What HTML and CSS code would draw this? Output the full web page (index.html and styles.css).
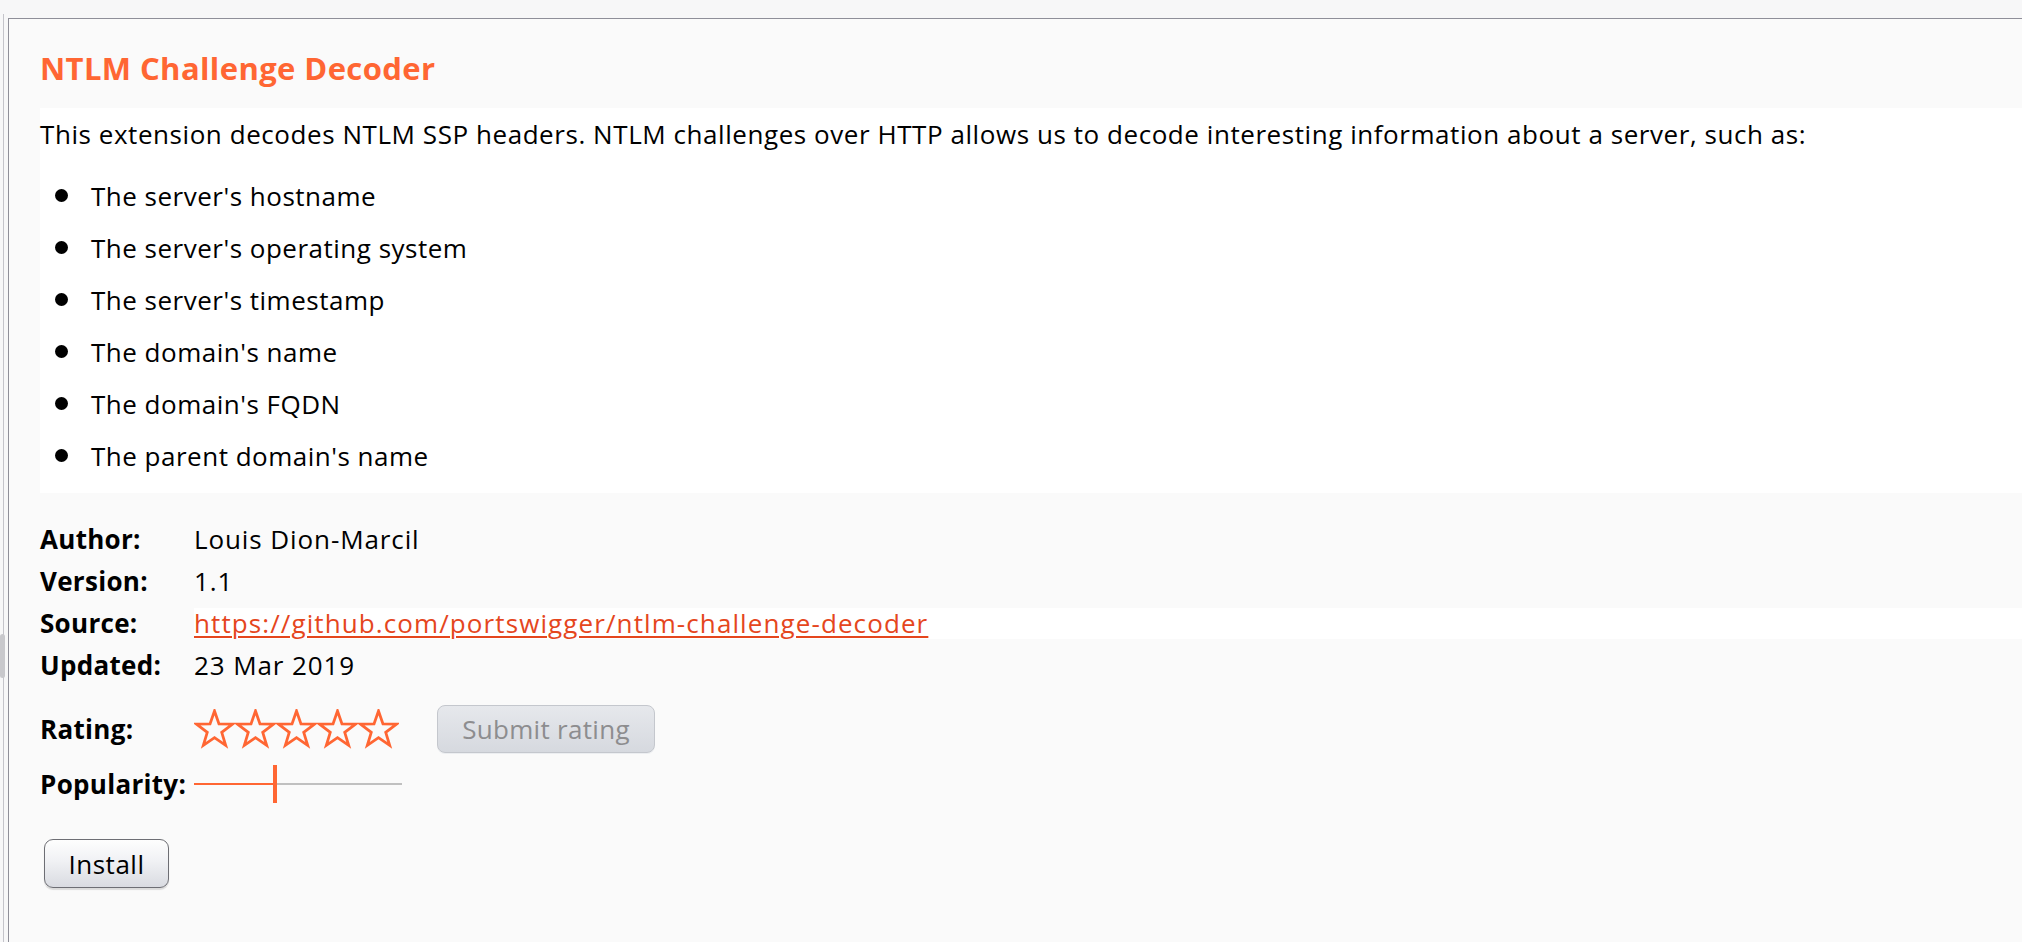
FILE: index.html
```html
<!DOCTYPE html>
<html>
<head>
<meta charset="utf-8">
<link rel="stylesheet" href="styles.css">
</head>
<body>
<div class="outer">
  <div class="knob"></div>
  <div class="panel">
    <h1 class="title">NTLM Challenge Decoder</h1>
    <div class="desc">
      <p class="lead">This extension decodes NTLM SSP headers. NTLM challenges over HTTP allows us to decode interesting information about a server, such as:</p>
      <ul class="bullets">
        <li><span class="dot"></span>The server's hostname</li>
        <li><span class="dot"></span>The server's operating system</li>
        <li><span class="dot"></span>The server's timestamp</li>
        <li><span class="dot"></span>The domain's name</li>
        <li><span class="dot"></span>The domain's FQDN</li>
        <li><span class="dot"></span>The parent domain's name</li>
      </ul>
    </div>
    <div class="meta">
      <div class="row"><span class="label">Author:</span><span class="value">Louis Dion-Marcil</span></div>
      <div class="row"><span class="label">Version:</span><span class="value">1.1</span></div>
      <div class="row"><span class="label">Source:</span><span class="value link-cell"><a class="link" href="#">https://github.com/portswigger/ntlm-challenge-decoder</a></span></div>
      <div class="row"><span class="label">Updated:</span><span class="value">23 Mar 2019</span></div>
    </div>
    <div class="row rating-row">
      <span class="label">Rating:</span>
      <span class="stars">
        <svg class="star" viewBox="0 0 41 41"><path d="M20.5 2 L24.97 14.85 L38.57 15.13 L27.73 23.35 L31.67 36.37 L20.5 28.6 L9.33 36.37 L13.27 23.35 L2.43 15.13 L16.03 14.85 Z"/></svg>
        <svg class="star" viewBox="0 0 41 41"><path d="M20.5 2 L24.97 14.85 L38.57 15.13 L27.73 23.35 L31.67 36.37 L20.5 28.6 L9.33 36.37 L13.27 23.35 L2.43 15.13 L16.03 14.85 Z"/></svg>
        <svg class="star" viewBox="0 0 41 41"><path d="M20.5 2 L24.97 14.85 L38.57 15.13 L27.73 23.35 L31.67 36.37 L20.5 28.6 L9.33 36.37 L13.27 23.35 L2.43 15.13 L16.03 14.85 Z"/></svg>
        <svg class="star" viewBox="0 0 41 41"><path d="M20.5 2 L24.97 14.85 L38.57 15.13 L27.73 23.35 L31.67 36.37 L20.5 28.6 L9.33 36.37 L13.27 23.35 L2.43 15.13 L16.03 14.85 Z"/></svg>
        <svg class="star" viewBox="0 0 41 41"><path d="M20.5 2 L24.97 14.85 L38.57 15.13 L27.73 23.35 L31.67 36.37 L20.5 28.6 L9.33 36.37 L13.27 23.35 L2.43 15.13 L16.03 14.85 Z"/></svg>
      </span>
      <button class="btn submit" disabled>Submit rating</button>
    </div>
    <div class="row pop-row">
      <span class="label">Popularity:</span>
      <span class="slider"><span class="fill"></span><span class="thumb"></span><span class="rest"></span></span>
    </div>
    <button class="btn install">Install</button>
  </div>
</div>
</body>
</html>
```

FILE: styles.css
```css
* { box-sizing: border-box; }
html, body { height: 100%; }
body {
  margin: 0;
  padding: 14px 0 0 3px;
  background: #f7f7f8;
  font-family: "Open Sans", "DejaVu Sans", sans-serif;
  font-size: 26px;
  color: #000;
  overflow: hidden;
}
.outer {
  position: relative;
  height: 100%;
  border-left: 1px solid #c4c4ca;
  padding: 4px 0 0 4px;
}
.knob {
  position: absolute;
  left: -4px;
  top: 620px;
  width: 5px;
  height: 44px;
  border-radius: 3px;
  background: #c8c8cc;
}
.panel {
  height: 100%;
  background: #fafafa;
  border-top: 1px solid #8f8f99;
  border-left: 1px solid #8f8f99;
  padding-left: 31px;
}
.title {
  margin: 31px 0 0 0;
  font-size: 31px;
  letter-spacing: 0.4px;
  line-height: 36px;
  font-weight: bold;
  color: #ff6633;
  height: 58px;
}
.desc {
  background: #ffffff;
  padding: 0 0 11px 0;
  letter-spacing: 0.5px;
}
.lead {
  margin: 0;
  line-height: 52px;
  white-space: nowrap;
  letter-spacing: 0.56px;
}
.bullets {
  list-style: none;
  margin: 10px 0 0 0;
  padding: 0;
}
.bullets li {
  display: flex;
  align-items: center;
  line-height: 52px;
}
.dot {
  width: 13px;
  height: 13px;
  border-radius: 50%;
  background: #000;
  margin: 0 23px 0 15px;
  position: relative;
  top: -1px;
}
.meta {
  margin-top: 25px;
}
.row {
  display: flex;
  align-items: center;
  height: 42px;
}
.label {
  width: 154px;
  flex: none;
  font-weight: bold;
  line-height: 42px;
  letter-spacing: 0.3px;
}
.value {
  line-height: 42px;
  letter-spacing: 0.9px;
}
.link-cell {
  flex: 1;
  background: #ffffff;
  height: 31px;
  line-height: 31px;
}
.link {
  color: #e5461d;
  letter-spacing: 1.1px;
  text-decoration: underline;
  text-decoration-thickness: 2px;
  text-underline-offset: 3px;
}
.rating-row {
  margin-top: 19px;
  height: 48px;
}
.stars {
  display: flex;
  width: 243px;
}
.star {
  width: 41px;
  height: 41px;
  fill: none;
  stroke: #ff6633;
  stroke-width: 2.8;
  stroke-linejoin: miter;
}
.btn {
  font-family: "Open Sans", "DejaVu Sans", sans-serif;
  font-size: 26px;
  padding: 0;
}
.submit {
  width: 218px;
  height: 48px;
  border: 1.5px solid #c4c7cd;
  border-radius: 8px;
  background: linear-gradient(#e6e8ec, #d6d9df);
  color: #8d8d8f;
  letter-spacing: 0.3px;
  box-shadow: 0 1px 0 #eceef1;
}
.pop-row {
  margin-top: 10px;
}
.slider {
  display: flex;
  align-items: center;
  width: 208px;
  height: 38px;
}
.fill {
  width: 79px;
  height: 2px;
  background: #ff6633;
}
.thumb {
  width: 4px;
  height: 38px;
  background: #ff6633;
}
.rest {
  flex: 1;
  height: 2px;
  background: #c0c0c0;
}
.install {
  display: block;
  margin: 34px 0 0 4px;
  width: 125px;
  height: 49px;
  border: 1.5px solid #6d6e74;
  border-radius: 9px;
  background: linear-gradient(#fefefe, #f0f1f4 45%, #d9dbe1);
  color: #000;
  letter-spacing: 0.5px;
  box-shadow: 0 2px 1px rgba(0,0,0,0.12);
}
```
